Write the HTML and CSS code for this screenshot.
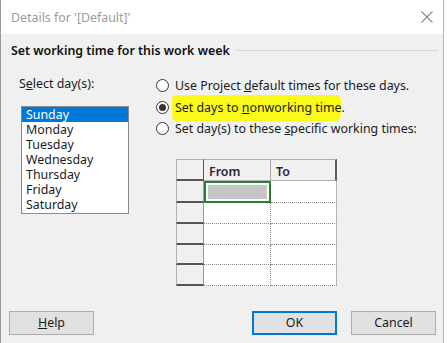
FILE: index.html
```html
<!DOCTYPE html>
<html>
<head>
<meta charset="utf-8">
<link rel="stylesheet" href="styles.css">
</head>
<body>
<div class="dialog">
  <div class="titlebar">
    <span class="title">Details for '[Default]'</span>
    <svg class="close" width="12" height="12" viewBox="0 0 12 12"><path d="M0.5 0.5 L11.5 11.5 M11.5 0.5 L0.5 11.5" stroke="#8a8a8a" stroke-width="1.1" fill="none"/></svg>
  </div>
  <div class="content">
    <div class="group-title"><span>Set working time for this work week</span><div class="rule"></div></div>
    <div class="main">
      <div class="left">
        <div class="label">S<u>e</u>lect day(s):</div>
        <div class="listbox">
          <div class="item selected">Sunday</div>
          <div class="item">Monday</div>
          <div class="item">Tuesday</div>
          <div class="item">Wednesday</div>
          <div class="item">Thursday</div>
          <div class="item">Friday</div>
          <div class="item">Saturday</div>
        </div>
      </div>
      <div class="right">
        <div class="radio-row"><span class="radio"></span><span>Use Project <u>d</u>efault times for these days.</span></div>
        <div class="radio-row"><span class="radio checked"></span><span><span class="hl">Set days to <u>n</u>onworking time</span>.</span></div>
        <div class="radio-row"><span class="radio"></span><span>Set day(s) to these <u>s</u>pecific working times:</span></div>
        <div class="grid">
          <div class="hcell corner"></div>
          <div class="hcell">From</div>
          <div class="hcell last">To</div>
          <div class="rh"></div><div class="cell active"><div class="fill"></div></div><div class="cell"></div>
          <div class="rh"></div><div class="cell"></div><div class="cell"></div>
          <div class="rh"></div><div class="cell"></div><div class="cell"></div>
          <div class="rh"></div><div class="cell"></div><div class="cell"></div>
          <div class="rh"></div><div class="cell"></div><div class="cell"></div>
        </div>
      </div>
    </div>
    <div class="buttons">
      <button class="btn"><u>H</u>elp</button>
      <div class="spacer"></div>
      <button class="btn ok">OK</button>
      <button class="btn">Cancel</button>
    </div>
  </div>
</div>
</body>
</html>
```

FILE: styles.css
```css
* { box-sizing: border-box; }
html, body { margin: 0; padding: 0; background: #ffffff; }
body {
  font-family: "Noto Sans", "Open Sans", sans-serif;
  font-size: 12.4px;
  color: #1b1b1b;
  width: 447px;
  height: 343px;
  overflow: hidden;
}
.dialog {
  width: 444px;
  height: 343px;
  border-left: 1px solid #9a9a9a;
  border-right: 1px solid #b5b5b5;
  display: flex;
  flex-direction: column;
}
.titlebar {
  height: 34px;
  background: #ffffff;
  display: flex;
  align-items: center;
  justify-content: space-between;
  padding: 0 10px 0 10px;
}
.title { color: #9b9b9b; }
.content {
  flex: 1;
  background: #f0f0f0;
  padding-top: 9px;
}
.group-title {
  display: flex;
  align-items: center;
  padding-left: 10px;
  padding-right: 5px;
  line-height: 16px;
  font-weight: 600;
  color: #111;
}
.group-title .rule {
  flex: 1;
  height: 1px;
  background: #d6d6d6;
  margin-left: 6px;
  margin-top: -1px;
}
.main {
  display: flex;
  margin-top: 17px;
}
.left { width: 155px; padding-left: 18px; }
.label { line-height: 16px; }
.listbox {
  margin-top: 14px;
  margin-left: 2px;
  width: 108px;
  height: 108px;
  background: #fff;
  border: 1px solid #8a8a8a;
}
.item {
  height: 15px;
  line-height: 15px;
  padding-left: 4px;
  color: #1b1b1b;
}
.item.selected { background: #0078d7; color: #fff; }
.right { display: flex; flex-direction: column; margin-top: -1px; }
.radio-row {
  display: flex;
  align-items: center;
  height: 21.5px;
  gap: 6px;
}
.radio {
  width: 13px;
  height: 13px;
  border: 1px solid #333;
  border-radius: 50%;
  background: #fff;
  display: flex;
  align-items: center;
  justify-content: center;
  flex: none;
}
.radio.checked::after {
  content: "";
  width: 7px;
  height: 7px;
  border-radius: 50%;
  background: #333;
}
.hl {
  background: #f9f91a;
  padding: 4px 0 5px 3px;
  margin-left: -3px;
  border-radius: 5px;
}
.grid {
  margin-top: 19px;
  margin-left: 20px;
  display: grid;
  grid-template-columns: 28px 67px 66px;
  grid-template-rows: 22px 22px 21px 21px 20px 21px;
  width: 161px;
}
.hcell {
  background: #f0f0f0;
  border-top: 1px solid #b0b0b0;
  border-right: 1px solid #a8a8a8;
  border-bottom: 1px solid #b0b0b0;
  padding-left: 5px;
  line-height: 23px;
  font-weight: 600;
  color: #2b2540;
}
.hcell.corner { border-left: 1px solid #b0b0b0; border-right: 1px solid #5a5a5a; border-bottom: 2px solid #555; }
.hcell.last { border-right: 2px solid #5a5a5a; }
.rh {
  background: #f0f0f0;
  border-left: 1px solid #b0b0b0;
  border-right: 1px solid #9a9a9a;
  border-bottom: 2px solid #555;
}
.cell {
  background: #fff;
  border-right: 1px dotted #8a8a8a;
  border-bottom: 1px dotted #8a8a8a;
}
.cell:nth-child(3n) { border-right: 1px solid #b5b5b5; }
.cell.active {
  border: 2px solid #2f7d32;
  padding: 2px;
}
.cell.active .fill { width: 100%; height: 100%; background: #c6c6c6; }
.buttons {
  display: flex;
  margin-top: 25px;
  padding-left: 8px;
  gap: 14px;
}
.spacer { flex: 1; }
.btn {
  font-family: inherit;
  font-size: 12.4px;
  color: #1b1b1b;
  width: 85px;
  height: 24px;
  background: #e1e1e1;
  border: 1px solid #adadad;
  padding: 0;
  margin: 0;
}
.btn.ok { border: 2px solid #0078d7; }
.buttons .btn:last-child { margin-right: 7px; }
```
